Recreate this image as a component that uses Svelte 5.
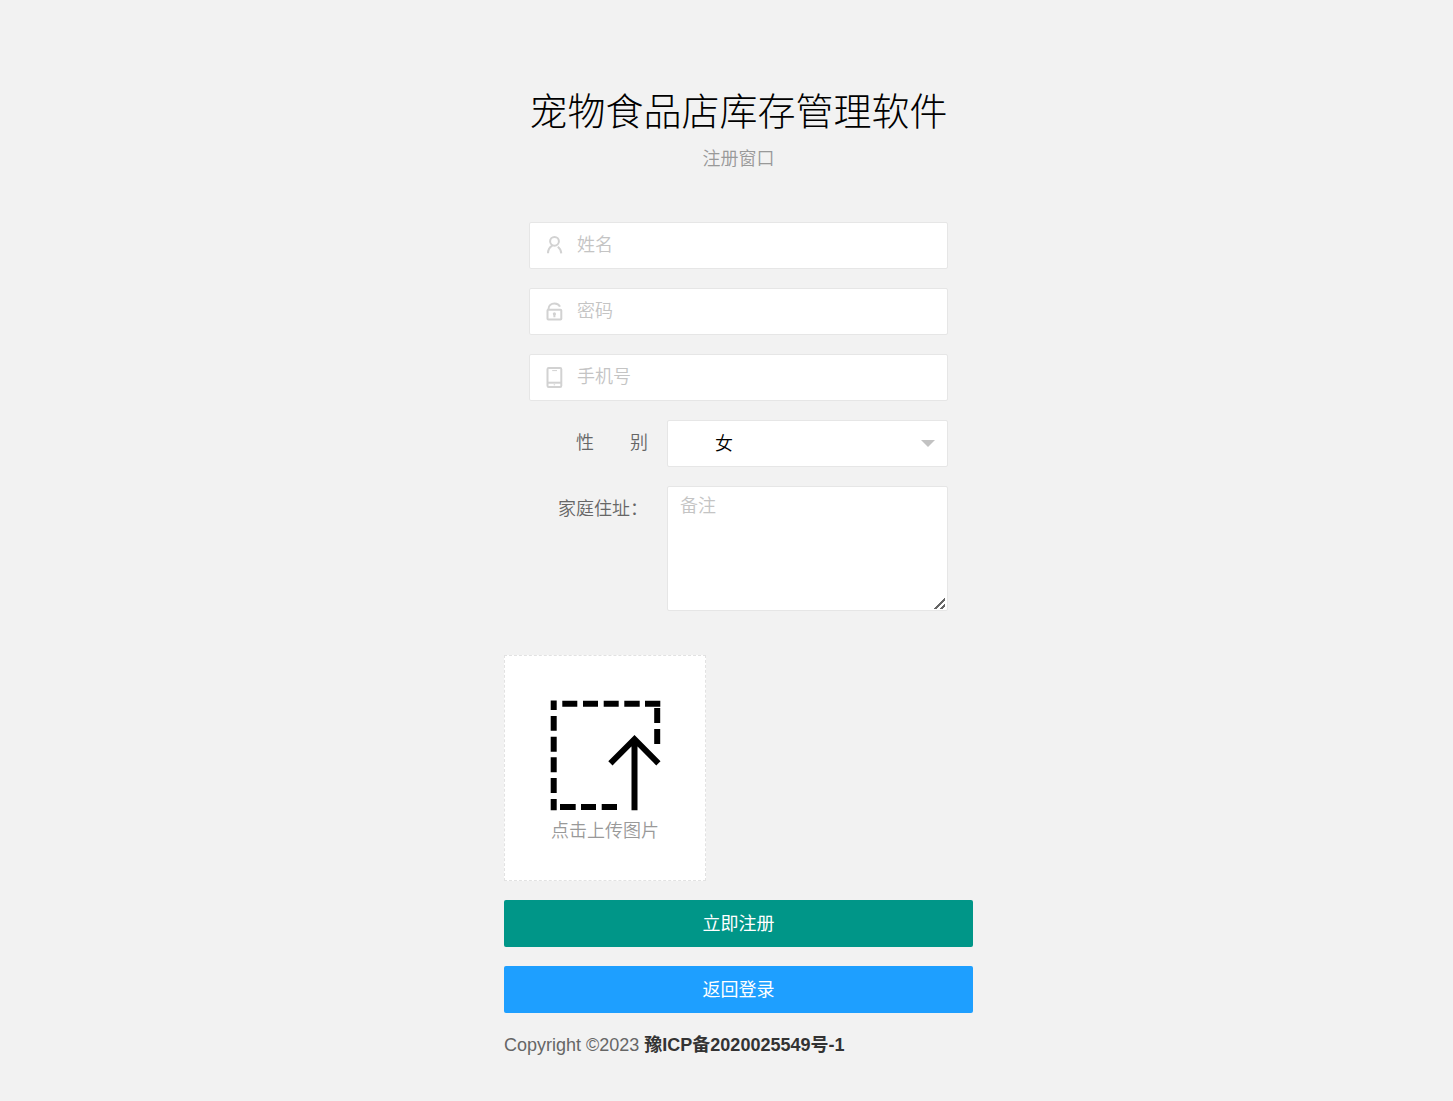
<script>

    let fields = [
        { name: 'username', icon: 'user', type: 'text', title: '姓名' },
        { name: 'password', icon: 'lock', type: 'password', title: '密码' },
        { name: 'phone', icon: 'phone', type: 'text', title: '手机号' },
    ];

    let values = $state({ username: '', password: '', phone: '' });
    let sex = $state('女');
    let address = $state('');

</script>

<main>
    <header>
        <h1>宠物食品店库存管理软件</h1>
        <p>注册窗口</p>
    </header>

    <form onsubmit={(e) => e.preventDefault()}>
        <div class="fields">
            {#each fields as { name, icon, type, title }}
                <div class="item">
                    <label class="icon" for={name} aria-label={title}>
                        <svg viewBox="0 0 20 24" width="20" height="24">
                            {#if icon === 'user'}
                                <circle cx="10.5" cy="7.3" r="4.4" />
                                <path d="M4 19.300c0-3.500 1.300-5.800 4.300-7.600M13.800 12.800c2 1.500 3.200 3.500 3.500 6.500" />
                            {:else if icon === 'lock'}
                                <rect x="3.500" y="9.800" width="13.800" height="9.700" rx="0.800" />
                                <path d="M4.500 9c0-3.500 2.600-5.500 6-5.500 2.500 0 4.500 1 5.500 3.200M10.400 14v3.200" />
                                <circle class="fill" cx="10.400" cy="13.800" r="1.600" />
                            {:else}
                                <rect x="3.500" y="2" width="13.800" height="19" rx="1.200" />
                                <path d="M3.500 16.700h13.800" />
                                <path class="thin" d="M8.200 4.600h4.800M9.700 18.800h1.400" />
                            {/if}
                        </svg>
                    </label>
                    <input id={name} {type} placeholder={title} bind:value={values[name]} />
                </div>
            {/each}

            <div class="row">
                <label for="sex">性&emsp;&emsp;别</label>
                <div class="select">
                    <select id="sex" bind:value={sex}>
                        <option>女</option>
                        <option>男</option>
                    </select>
                </div>
            </div>

            <div class="row">
                <label for="address">家庭住址：</label>
                <textarea id="address" placeholder="备注" bind:value={address}></textarea>
            </div>
        </div>

        <button type="button" class="upload">
            <svg viewBox="0 0 111 111" width="111" height="111">
                <path d="M3.700 0.500V10M3.700 16V30.800M3.700 36.700V51.700M3.700 57.300V72.300M3.700 78V93M3.700 99V110.300" />
                <path d="M12.300 3.700H27.300M33 3.700H48M53.700 3.700H68.700M74.300 3.700H89.700M95 3.700H110.300" />
                <path d="M107.200 8V23M107.200 29V44M10 107H25.700M31 107H46M51.700 107H67" />
                <path d="M84.500 110.300V40M60.400 63.300L84.500 39.200L108.400 63.300" />
            </svg>
            <span>点击上传图片</span>
        </button>

        <button type="submit" class="btn">立即注册</button>
        <button type="button" class="btn login">返回登录</button>
    </form>

    <footer>Copyright ©2023 <strong>豫ICP备2020025549号-1</strong></footer>
</main>

<style>

    :global(body) {
        background-color: #f2f2f2;
    }

    main {
        box-sizing: border-box;
        max-width: 493px;
        margin: 0 auto;
        padding: 85px 0 40px 24px;
        font: 18px/24px "Liberation Sans", "Noto Sans CJK SC", sans-serif;
        color: #666;
    }

    main * {
        box-sizing: border-box;
    }

    header {
        text-align: center;
        margin-bottom: 51px;
    }

    h1 {
        margin: 0;
        font-size: 38px;
        line-height: 54px;
        font-weight: 300;
        color: #000;
        white-space: nowrap;
    }

    header p {
        margin: 8px 0 0;
        font-weight: 350;
        color: #999;
    }

    form {
        display: flex;
        flex-direction: column;
        gap: 19px;
    }

    .fields {
        display: flex;
        flex-direction: column;
        gap: 19px;
        padding: 0 25px;
        margin-bottom: 25px;
    }

    .item, .select {
        position: relative;
    }

    .icon {
        position: absolute;
        top: 12px;
        left: 15px;
        height: 24px;
    }

    .icon svg {
        fill: none;
        stroke: #d2d2d2;
        stroke-width: 2;
    }

    .icon .fill {
        fill: #d2d2d2;
        stroke: none;
    }

    .icon .thin {
        stroke-width: 1;
    }

    input, select, textarea {
        display: block;
        width: 100%;
        height: 47px;
        margin: 0;
        border: 1px solid #e6e6e6;
        border-radius: 2px;
        background-color: #fff;
        font: inherit;
        font-weight: 350;
        color: #000;
        outline: none;
    }

    input {
        padding: 0 12px 0 47px;
    }

    ::placeholder {
        color: #c4c4c4;
        opacity: 1;
    }

    .row {
        display: flex;
    }

    .row label {
        flex: none;
        width: 138px;
        padding: 11px 19px;
        text-align: right;
        font-weight: 350;
    }

    .select {
        flex: 1;
    }

    .select::after {
        content: '';
        position: absolute;
        top: 20px;
        right: 13px;
        border: 7px solid transparent;
        border-top-color: #c2c2c2;
        border-bottom: 0;
        pointer-events: none;
    }

    select {
        appearance: none;
        padding: 0 47px;
    }

    textarea {
        flex: 1;
        height: 125px;
        padding: 7px 12px;
        resize: vertical;
    }

    textarea::-webkit-resizer {
        background: linear-gradient(315deg, transparent 2px, #666 2px, #666 4px, transparent 4px, transparent 6px, #666 6px, #666 8px, transparent 8px) right 2px bottom 1px / 11px 11px no-repeat;
    }

    .upload {
        display: flex;
        flex-direction: column;
        align-items: center;
        align-self: flex-start;
        width: 202px;
        height: 226px;
        padding: 44px 0 0;
        border: 1px dashed #e2e2e2;
        background-color: #fff;
        font: inherit;
        font-weight: 350;
        color: #999;
        cursor: pointer;
    }

    .upload svg {
        margin-bottom: 8px;
        fill: none;
        stroke: #000;
        stroke-width: 6;
    }

    .btn {
        height: 47px;
        padding: 0 22px;
        border: none;
        border-radius: 2px;
        background-color: #009688;
        font: inherit;
        color: #fff;
        cursor: pointer;
    }

    .login {
        background-color: #1e9fff;
    }

    footer {
        margin-top: 20px;
        white-space: nowrap;
    }

    strong {
        color: #333;
    }

</style>
